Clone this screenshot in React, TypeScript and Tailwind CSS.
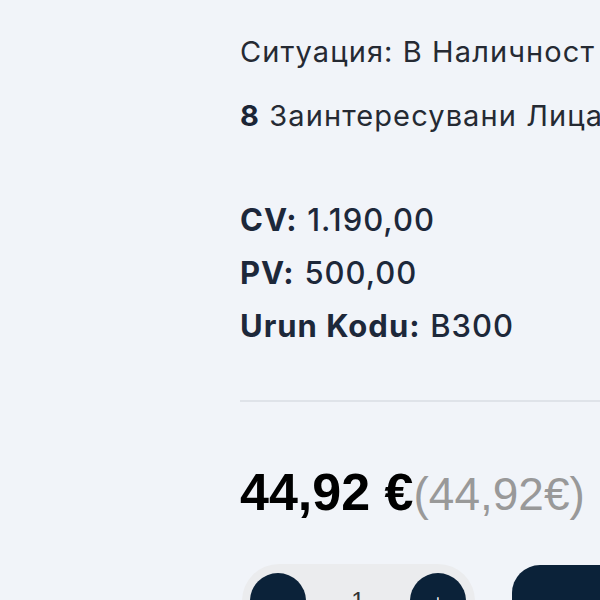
import React from "react";

const rows = [
  { label: "CV:", value: "1.190,00" },
  { label: "PV:", value: "500,00" },
  { label: "Urun Kodu:", value: "B300" },
];

export default function App() {
  return (
    <div className="w-[600px] h-[600px] overflow-hidden bg-[#f1f4f9]">
      <div className="pl-[240px] pt-[34px] flex flex-col w-[800px]">
        <div className="font-['Inter',sans-serif] text-[29px] tracking-[1.1px] leading-[36px] text-[#252a33] whitespace-nowrap">
          Ситуация: В Наличност
        </div>
        <div className="mt-[28px] font-['Inter',sans-serif] text-[29px] tracking-[1.1px] leading-[36px] text-[#252a33] whitespace-nowrap">
          <span className="font-bold text-[#1b2536]">8</span> Заинтересувани Лица
        </div>

        <div className="mt-[59px] flex flex-col font-['Inter',sans-serif] text-[31px] tracking-[1px] leading-[53px] text-[#1d283a]">
          {rows.map((r) => (
            <div key={r.label} className="whitespace-nowrap">
              <span className="font-bold">{r.label}</span>{" "}
              <span className="font-medium">{r.value}</span>
            </div>
          ))}
        </div>

        <div className="mt-[48px] h-[2px] bg-[#dfe3e9]" />

        <div className="mt-[60px] font-['Liberation_Sans',Arial,sans-serif] leading-[60px] whitespace-nowrap">
          <span className="text-[52px] font-bold text-black">44,92 €</span>
          <span className="text-[46px] text-[#999999]">(44,92€)</span>
        </div>

        <div className="mt-[29px] flex items-start">
          <div className="ml-[2px] flex items-center bg-[#ebecee] rounded-full pl-[8px] pr-[9px] py-[9px]">
            <button className="w-[56px] h-[56px] rounded-full bg-[#0b2239] text-white text-lg">−</button>
            <div className="w-[104px] text-center font-['Liberation_Sans',Arial,sans-serif] text-[24px] text-[#333]">1</div>
            <button className="w-[56px] h-[56px] rounded-full bg-[#0b2239] text-white text-lg">+</button>
          </div>
          <button className="ml-[37px] mt-[1px] h-[74px] rounded-[28px] bg-[#0b2239] px-[66px] font-['Liberation_Sans',Arial,sans-serif] text-[26px] font-bold text-white flex items-start pt-[26px]">
            Купи
          </button>
        </div>
      </div>
    </div>
  );
}
